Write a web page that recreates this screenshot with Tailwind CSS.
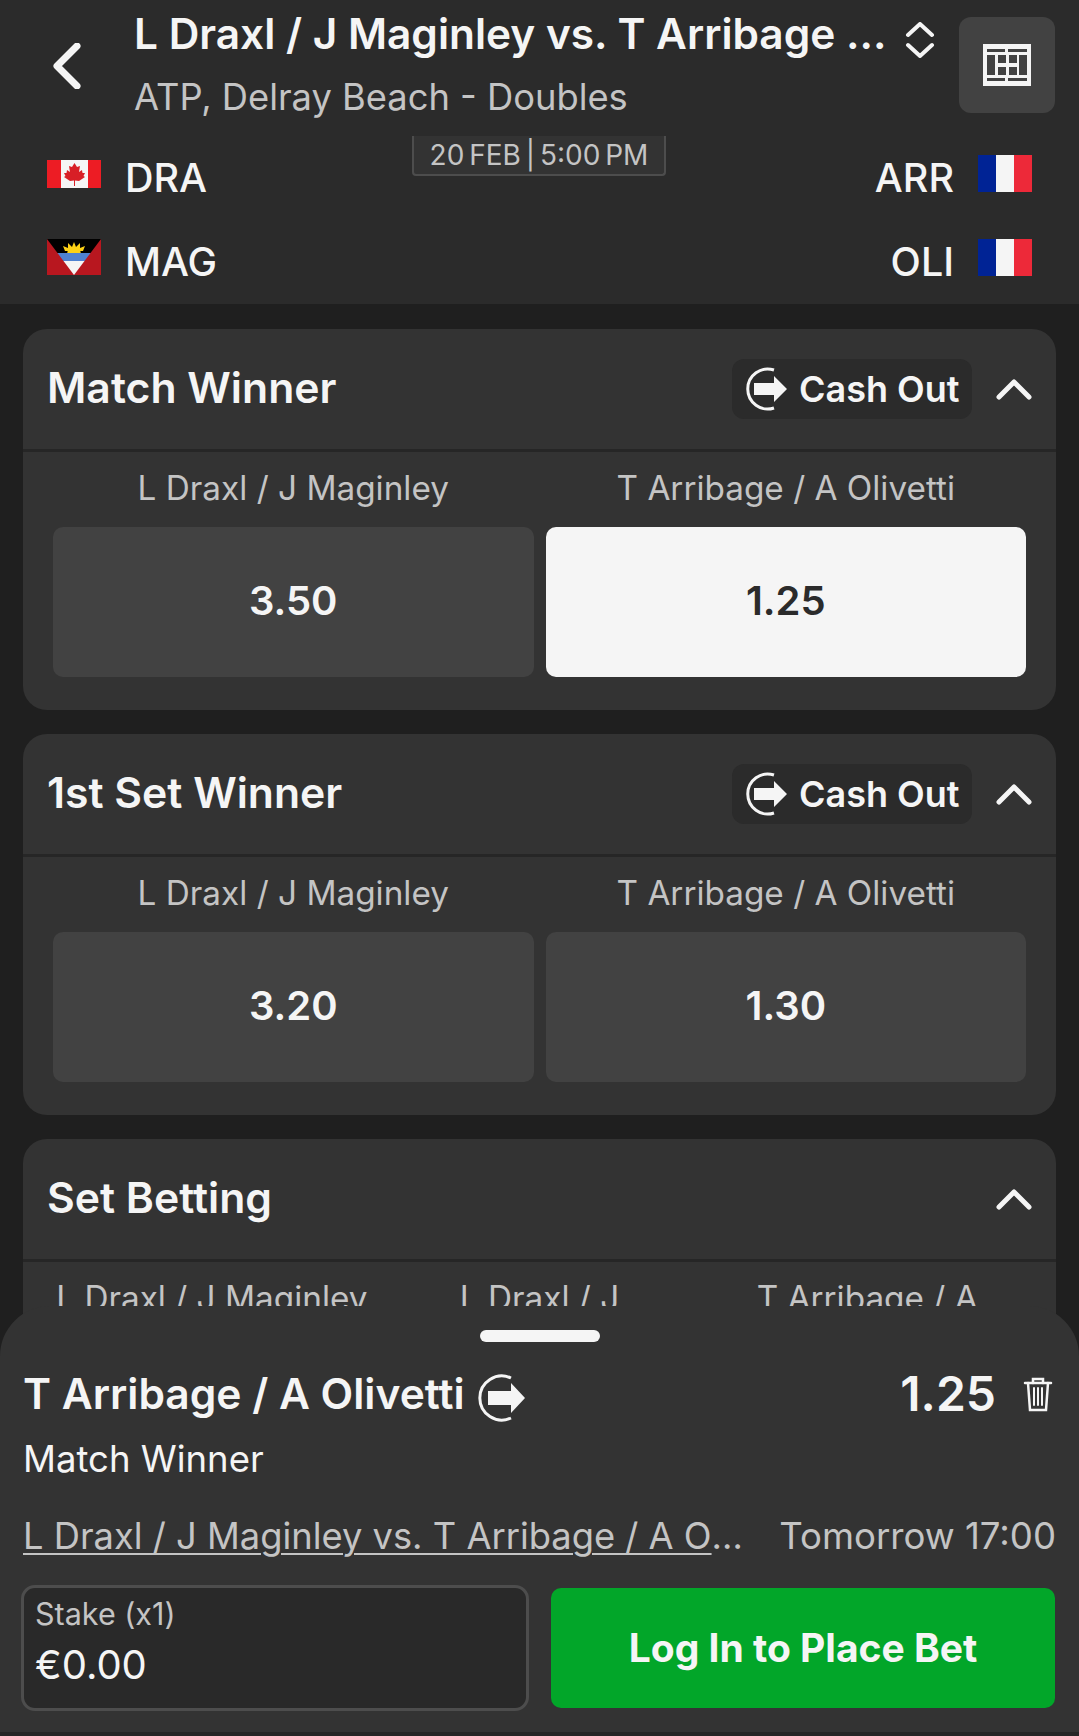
<!DOCTYPE html>
<html lang="en">
<head>
  <meta charset="UTF-8" />
  <title>Match betting</title>
  <script src="https://cdn.jsdelivr.net/npm/@tailwindcss/browser@4"></script>
</head>
<body class="bg-[#1f1f1f] font-['Inter',sans-serif]">
<div class="relative h-[1736px] w-[1079px] overflow-hidden">

  <!-- header -->
  <header class="relative z-10 flex h-[136px] items-start bg-[#2b2b2b]">
    <div class="flex h-[136px] w-[134px] shrink-0 items-center pb-[5px] pl-[52px]">
      <svg width="30" height="46" viewBox="0 0 30 46" fill="none" stroke="#f5f5f5" stroke-width="7" stroke-linecap="round" stroke-linejoin="round"><path d="M25 3 L5 23 L25 43" /></svg>
    </div>
    <div class="w-[800px] shrink-0 pt-[8px]">
      <div class="flex items-center">
        <span class="whitespace-nowrap text-[42.4px] leading-[52px] font-semibold text-[#f5f5f5]">L Draxl / J Maginley vs. T Arribage ...</span>
        <svg class="ml-[18px] mt-[12px] shrink-0" width="30" height="36" viewBox="0 0 30 36" fill="none" stroke="#f5f5f5" stroke-width="4" stroke-linecap="round" stroke-linejoin="round"><path d="M3 13 L15 2 L27 13" /><path d="M3 23 L15 34 L27 23" /></svg>
      </div>
      <div class="mt-[16px] whitespace-nowrap text-[36.3px] leading-[42px] text-[#c4c4c4]">ATP, Delray Beach - Doubles</div>
    </div>
    <button class="ml-auto mr-[24px] mt-[17px] flex h-[96px] w-[96px] items-center justify-center rounded-[12px] bg-[#424242]">
      <svg width="48" height="42" viewBox="0 0 48 42" fill="#424242">
        <rect width="48" height="42" fill="#f5f5f5" />
        <rect x="4" y="5" width="18" height="3" /><rect x="25" y="5" width="19" height="3" />
        <rect x="4" y="11" width="8" height="20" /><rect x="36" y="11" width="8" height="20" />
        <rect x="15" y="11" width="8" height="8" /><rect x="26" y="11" width="8" height="8" />
        <rect x="15" y="23" width="8" height="8" /><rect x="26" y="23" width="8" height="8" />
        <rect x="4" y="34" width="18" height="3" /><rect x="25" y="34" width="19" height="3" />
      </svg>
    </button>
  </header>

  <!-- score strip -->
  <section class="relative h-[168px] bg-[#2b2b2b]">
    <div class="absolute left-[412px] top-0 flex h-[40px] w-[254px] items-center justify-center rounded-b-[4px] border-x-2 border-b-2 border-[#4d4d4d] bg-[#333333] text-[28px] [word-spacing:-3px] whitespace-nowrap text-[#c4c4c4]">20 FEB | 5:00 PM</div>
    <div class="flex items-start justify-between px-[47px] pt-[18px]">
      <div class="flex items-center gap-[24px]">
        <svg class="mb-[8px]" width="54" height="28" viewBox="0 0 54 28"><rect width="54" height="28" fill="#ed1c24" /><rect x="14" width="27" height="28" fill="#f5f5f5" /><path d="M27.5 3 L30 7 L33 6 L32 12 L35 10 L35.5 13 L38 13 L36.5 16 L38 17 L32 21 L28 20.5 L28 26 L27 26 L27 20.5 L23 21 L17 17 L18.5 16 L17 13 L19.5 13 L20 10 L23 12 L22 6 L25 7 Z" fill="#d81f26" /></svg>
        <span class="text-[39.5px] leading-[48px] font-medium text-[#f5f5f5]">DRA</span>
      </div>
      <div class="flex items-center gap-[24px]">
        <span class="text-[39.5px] leading-[48px] font-medium text-[#f5f5f5]">ARR</span>
        <svg class="mb-[10px]" width="54" height="37" viewBox="0 0 54 37"><rect width="18" height="37" fill="#002395" /><rect x="18" width="18" height="37" fill="#f5f5f5" /><rect x="36" width="18" height="37" fill="#ed2939" /></svg>
      </div>
    </div>
    <div class="flex items-start justify-between px-[47px] pt-[36px]">
      <div class="flex items-center gap-[24px]">
        <svg class="mb-[10px]" width="54" height="36" viewBox="0 0 54 36">
          <rect width="54" height="36" fill="#000" />
          <circle cx="27" cy="15" r="7" fill="#fcd116" />
          <path d="M27 3 L29 8 L33 4 L33 9 L38 7 L36 12 L18 12 L16 7 L21 9 L21 4 L25 8 Z" fill="#fcd116" />
          <rect x="9" y="14" width="36" height="8" fill="#4f82d1" />
          <rect x="14" y="22" width="26" height="14" fill="#f5f5f5" />
          <path d="M0 0 L27 36 L0 36 Z M54 0 L27 36 L54 36 Z" fill="#b8171f" />
        </svg>
        <span class="text-[39.5px] leading-[48px] font-medium text-[#f5f5f5]">MAG</span>
      </div>
      <div class="flex items-center gap-[24px]">
        <span class="text-[39.5px] leading-[48px] font-medium text-[#f5f5f5]">OLI</span>
        <svg class="mb-[10px]" width="54" height="37" viewBox="0 0 54 37"><rect width="18" height="37" fill="#002395" /><rect x="18" width="18" height="37" fill="#f5f5f5" /><rect x="36" width="18" height="37" fill="#ed2939" /></svg>
      </div>
    </div>
  </section>

  <!-- markets -->
  <main class="flex flex-col gap-[24px] px-[23px] pt-[25px]">

    <div class="rounded-[24px] bg-[#333333]">
      <div class="flex h-[123px] items-center border-b-[3px] border-[#262626] pl-[24px] pr-[24px]">
        <h2 class="pb-[2px] text-[42.7px] font-semibold text-[#f5f5f5]">Match Winner</h2>
        <div class="ml-auto flex h-[60px] w-[240px] items-center rounded-[12px] bg-[#2b2b2b] pl-[12px]">
          <svg width="44" height="44" viewBox="0 0 44 44" fill="#f5f5f5"><path d="M30 3 A20 20 0 1 0 30 41" fill="none" stroke="#f5f5f5" stroke-width="3" /><path d="M10 16 H30 V9 L43 22 L30 35 V28 H10 Z" /></svg>
          <span class="ml-[11px] text-[36px] font-semibold whitespace-nowrap text-[#f5f5f5]">Cash Out</span>
        </div>
        <svg class="ml-[24px]" width="36" height="22" viewBox="0 0 36 22" fill="none" stroke="#f5f5f5" stroke-width="5" stroke-linecap="round" stroke-linejoin="round"><path d="M3 19 L18 4 L33 19" /></svg>
      </div>
      <div class="grid grid-cols-2 gap-x-[12px] px-[30px] pb-[33px]">
        <div class="flex h-[75px] items-center justify-center pb-[2px] text-[33.3px] text-[#c4c4c4]">L Draxl / J Maginley</div>
        <div class="flex h-[75px] items-center justify-center pb-[2px] text-[33.3px] text-[#c4c4c4]">T Arribage / A Olivetti</div>
        <button class="flex h-[150px] items-center justify-center rounded-[10px] bg-[#424242] pb-[2px] text-[40px] font-semibold text-[#f5f5f5]">3.50</button>
        <button class="flex h-[150px] items-center justify-center rounded-[10px] bg-[#f5f5f5] pb-[2px] text-[40px] font-semibold text-[#2b2b2b]">1.25</button>
      </div>
    </div>

    <div class="rounded-[24px] bg-[#333333]">
      <div class="flex h-[123px] items-center border-b-[3px] border-[#262626] pl-[24px] pr-[24px]">
        <h2 class="pb-[2px] text-[42.7px] font-semibold text-[#f5f5f5]">1st Set Winner</h2>
        <div class="ml-auto flex h-[60px] w-[240px] items-center rounded-[12px] bg-[#2b2b2b] pl-[12px]">
          <svg width="44" height="44" viewBox="0 0 44 44" fill="#f5f5f5"><path d="M30 3 A20 20 0 1 0 30 41" fill="none" stroke="#f5f5f5" stroke-width="3" /><path d="M10 16 H30 V9 L43 22 L30 35 V28 H10 Z" /></svg>
          <span class="ml-[11px] text-[36px] font-semibold whitespace-nowrap text-[#f5f5f5]">Cash Out</span>
        </div>
        <svg class="ml-[24px]" width="36" height="22" viewBox="0 0 36 22" fill="none" stroke="#f5f5f5" stroke-width="5" stroke-linecap="round" stroke-linejoin="round"><path d="M3 19 L18 4 L33 19" /></svg>
      </div>
      <div class="grid grid-cols-2 gap-x-[12px] px-[30px] pb-[33px]">
        <div class="flex h-[75px] items-center justify-center pb-[2px] text-[33.3px] text-[#c4c4c4]">L Draxl / J Maginley</div>
        <div class="flex h-[75px] items-center justify-center pb-[2px] text-[33.3px] text-[#c4c4c4]">T Arribage / A Olivetti</div>
        <button class="flex h-[150px] items-center justify-center rounded-[10px] bg-[#424242] pb-[2px] text-[40px] font-semibold text-[#f5f5f5]">3.20</button>
        <button class="flex h-[150px] items-center justify-center rounded-[10px] bg-[#424242] pb-[2px] text-[40px] font-semibold text-[#f5f5f5]">1.30</button>
      </div>
    </div>

    <div class="rounded-[24px] bg-[#333333]">
      <div class="flex h-[123px] items-center border-b-[3px] border-[#262626] pl-[24px] pr-[24px]">
        <h2 class="pb-[2px] text-[42.7px] font-semibold text-[#f5f5f5]">Set Betting</h2>
        <svg class="ml-auto" width="36" height="22" viewBox="0 0 36 22" fill="none" stroke="#f5f5f5" stroke-width="5" stroke-linecap="round" stroke-linejoin="round"><path d="M3 19 L18 4 L33 19" /></svg>
      </div>
      <div class="grid grid-cols-3 px-[25px] pb-[33px]">
        <div class="flex h-[75px] items-center justify-center pb-[2px] text-[33.3px] text-[#c4c4c4]">L Draxl / J Maginley</div>
        <div class="flex h-[75px] items-center justify-center pb-[2px] text-[33.3px] text-[#c4c4c4]">L Draxl / J</div>
        <div class="flex h-[75px] items-center justify-center pb-[2px] text-[33.3px] text-[#c4c4c4]">T Arribage / A</div>
      </div>
    </div>
  </main>

  <!-- bet slip sheet -->
  <aside class="absolute inset-x-0 bottom-0 z-20 h-[430px] rounded-t-[50px] border-b-[4px] border-[#262626] bg-[#333333] px-[23px]">
    <div class="mx-auto mt-[24px] h-[12px] w-[120px] rounded-full bg-[#f5f5f5]"></div>
    <div class="mt-[23px] flex h-[58px] items-center">
      <span class="text-[42.5px] font-semibold whitespace-nowrap text-[#f5f5f5]">T Arribage / A Olivetti</span>
      <svg class="ml-[13px] mt-[8px]" width="48" height="48" viewBox="0 0 48 48" fill="#f5f5f5"><path d="M33 4 A22 22 0 1 0 33 44" fill="none" stroke="#f5f5f5" stroke-width="3" /><path d="M10 17 H33 V9 L47 24 L33 39 V31 H10 Z" /></svg>
      <span class="ml-auto text-[48px] font-semibold text-[#f5f5f5]">1.25</span>
      <svg class="ml-[27px] mr-[3px]" width="30" height="36" viewBox="0 0 30 36" fill="none" stroke="#f5f5f5" stroke-width="2.5" stroke-linecap="round"><path d="M2 7 H28" /><path d="M10 7 V3 H20 V7" /><path d="M5 7 L7 34 H23 L25 7" /><path d="M11 12 V29 M15 12 V29 M19 12 V29" stroke-width="2" /></svg>
    </div>
    <div class="mt-[14px] text-[36.5px] leading-[44px] text-[#f5f5f5]">Match Winner</div>
    <div class="mt-[33px] flex items-center justify-between leading-[44px] text-[#c4c4c4]">
      <span class="w-[724px] truncate text-[36.3px] underline decoration-2 underline-offset-4">L Draxl / J Maginley vs. T Arribage / A Olivetti</span>
      <span class="whitespace-nowrap text-[36.6px]">Tomorrow 17:00</span>
    </div>
    <div class="-ml-[2px] mt-[27px] flex items-center gap-[22px]">
      <div class="h-[126px] w-[508px] rounded-[14px] border-[3px] border-[#4d4d4d] bg-[#292929] px-[11px] pt-[6px]">
        <div class="text-[30.5px] leading-[40px] text-[#c4c4c4]">Stake (x1)</div>
        <div class="mt-[7px] text-[40px] leading-[48px] text-[#f5f5f5]">€0.00</div>
      </div>
      <button class="h-[120px] w-[504px] rounded-[10px] bg-[#02a629] text-[39px] font-bold text-[#f5f5f5]">Log In to Place Bet</button>
    </div>
  </aside>
</div>
</body>
</html>
